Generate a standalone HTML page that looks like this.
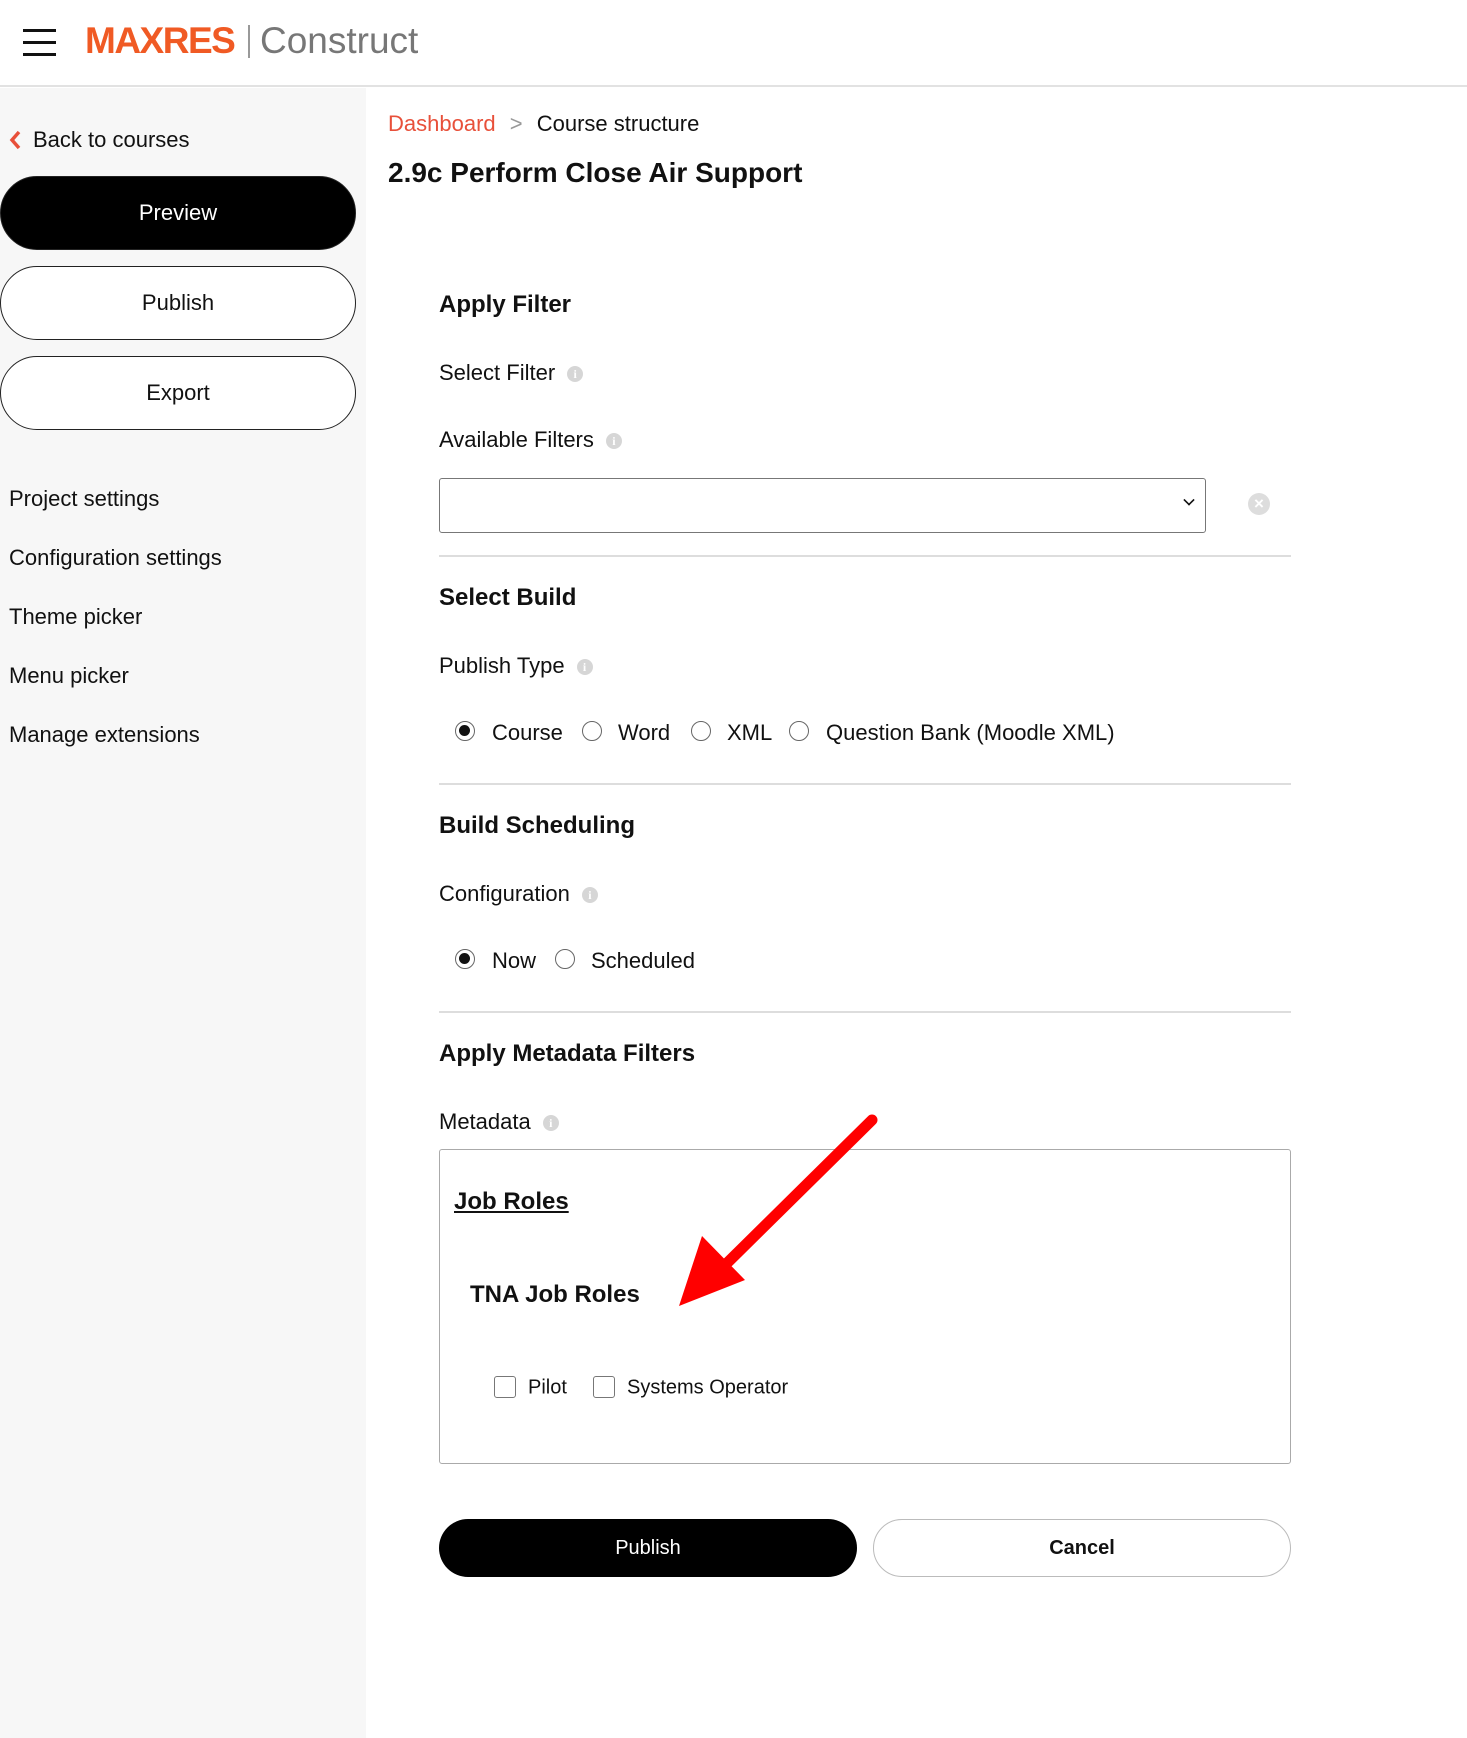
<!DOCTYPE html>
<html><head><meta charset="utf-8"><style>
*{box-sizing:border-box;margin:0;padding:0}
body{width:1467px;height:1738px;position:relative;background:#fff;font-family:"Liberation Sans",sans-serif;color:#111;overflow:hidden}
.a{position:absolute;white-space:nowrap}
.hdr{position:absolute;left:0;top:0;width:1467px;height:87px;border-bottom:2px solid #e2e2e2;background:#fff}
.side{position:absolute;left:0;top:88px;width:366px;height:1650px;background:#f7f7f7}
.btn{position:absolute;left:0;width:356px;height:74px;border-radius:37px;border:1.5px solid #222;font-size:22px;display:flex;align-items:center;justify-content:center}
.nav{font-size:22px;left:9px}
.lbl{font-size:22px;left:439px;transform:translateY(-50%)}
.h{font-size:24px;font-weight:bold;left:439px;transform:translateY(-50%)}
.info{display:inline-block;width:16px;height:16px;border-radius:50%;background:#d6d6d6;color:#fff;font-size:12px;font-weight:bold;text-align:center;line-height:16px;margin-left:12px;vertical-align:2px;font-family:"Liberation Serif",serif}
.hr{position:absolute;left:439px;width:852px;height:2px;background:#ddd}
.rad{position:absolute;width:20px;height:20px;border:1.5px solid #666;border-radius:50%;transform:translate(-50%,-50%)}
.rad.on::after{content:"";position:absolute;left:3px;top:3px;width:11px;height:11px;border-radius:50%;background:#111}
.rt{font-size:22px;transform:translateY(-50%)}
.cb{position:absolute;width:22px;height:22px;border:1.5px solid #777;border-radius:3px;transform:translate(-50%,-50%)}
</style></head><body>
<div class="hdr"></div>
<div class="a" style="left:23px;top:29px;width:33px;height:3px;background:#111"></div>
<div class="a" style="left:23px;top:41px;width:33px;height:3px;background:#111"></div>
<div class="a" style="left:23px;top:53px;width:33px;height:3px;background:#111"></div>
<div class="a" style="left:85px;top:20px;font-size:37px;font-weight:bold;color:#f05a24;letter-spacing:-1.5px">MAXRES</div>
<div class="a" style="left:248px;top:25px;width:2px;height:33px;background:#999"></div>
<div class="a" style="left:260px;top:20px;font-size:37px;color:#777">Construct</div>

<div class="side"></div>
<svg class="a" style="left:8px;top:130px" width="14" height="20"><path d="M11 2 L4 10 L11 18" fill="none" stroke="#e8503a" stroke-width="3.5"/></svg>
<div class="a" style="left:33px;top:127px;font-size:22px">Back to courses</div>
<div class="btn" style="top:176px;background:#000;color:#fff">Preview</div>
<div class="btn" style="top:266px;background:#fff">Publish</div>
<div class="btn" style="top:356px;background:#fff">Export</div>
<div class="a nav" style="top:486px">Project settings</div>
<div class="a nav" style="top:545px">Configuration settings</div>
<div class="a nav" style="top:604px">Theme picker</div>
<div class="a nav" style="top:663px">Menu picker</div>
<div class="a nav" style="top:722px">Manage extensions</div>

<div class="a" style="left:388px;top:111px;font-size:22px;color:#e8503a">Dashboard <span style="color:#999;margin:0 8px">&gt;</span> <span style="color:#111">Course structure</span></div>
<div class="a" style="left:388px;top:157px;font-size:28px;font-weight:bold">2.9c Perform Close Air Support</div>

<div class="a h" style="top:305px">Apply Filter</div>
<div class="a lbl" style="top:373px">Select Filter<span class="info">i</span></div>
<div class="a lbl" style="top:440px">Available Filters<span class="info">i</span></div>
<div class="a" style="left:439px;top:478px;width:767px;height:55px;border:1.5px solid #777;border-radius:3px"></div>
<div class="a" style="left:1184px;top:495px;width:10px;height:10px;border-right:2px solid #111;border-bottom:2px solid #111;transform:rotate(45deg) scale(.8)"></div>
<div class="a" style="left:1248px;top:493px;width:22px;height:22px;border-radius:50%;background:#ddd;color:#fff;font-size:17px;font-weight:bold;text-align:center;line-height:22px">×</div>
<div class="hr" style="top:555px"></div>

<div class="a h" style="top:598px">Select Build</div>
<div class="a lbl" style="top:666px">Publish Type<span class="info">i</span></div>
<div class="rad on" style="left:465px;top:731px"></div><div class="a rt" style="left:492px;top:733px">Course</div>
<div class="rad" style="left:592px;top:731px"></div><div class="a rt" style="left:618px;top:733px">Word</div>
<div class="rad" style="left:701px;top:731px"></div><div class="a rt" style="left:727px;top:733px">XML</div>
<div class="rad" style="left:799px;top:731px"></div><div class="a rt" style="left:826px;top:733px">Question Bank (Moodle XML)</div>
<div class="hr" style="top:783px"></div>

<div class="a h" style="top:826px">Build Scheduling</div>
<div class="a lbl" style="top:894px">Configuration<span class="info">i</span></div>
<div class="rad on" style="left:465px;top:959px"></div><div class="a rt" style="left:492px;top:961px">Now</div>
<div class="rad" style="left:565px;top:959px"></div><div class="a rt" style="left:591px;top:961px">Scheduled</div>
<div class="hr" style="top:1011px"></div>

<div class="a h" style="top:1054px">Apply Metadata Filters</div>
<div class="a lbl" style="top:1122px">Metadata<span class="info">i</span></div>
<div class="a" style="left:439px;top:1149px;width:852px;height:315px;border:1.5px solid #aaa;border-radius:3px"></div>
<div class="a" style="left:454px;top:1188px;font-size:24px;font-weight:bold;text-decoration:underline">Job Roles</div>
<div class="a" style="left:470px;top:1281px;font-size:24px;font-weight:bold">TNA Job Roles</div>
<div class="cb" style="left:505px;top:1387px"></div><div class="a rt" style="left:528px;top:1388px;font-size:20px">Pilot</div>
<div class="cb" style="left:604px;top:1387px"></div><div class="a rt" style="left:627px;top:1388px;font-size:20px">Systems Operator</div>

<div class="a" style="left:439px;top:1519px;width:418px;height:58px;border-radius:29px;background:#000;color:#fff;font-size:20px;display:flex;align-items:center;justify-content:center">Publish</div>
<div class="a" style="left:873px;top:1519px;width:418px;height:58px;border-radius:29px;border:1.5px solid #bbb;font-size:20px;font-weight:bold;display:flex;align-items:center;justify-content:center">Cancel</div>

<svg class="a" style="left:0;top:0" width="1467" height="1738">
<line x1="872" y1="1120" x2="718" y2="1272" stroke="#f00" stroke-width="11" stroke-linecap="round"/>
<polygon points="679,1306 702,1236 745,1280" fill="#f00"/>
</svg>
</body></html>
